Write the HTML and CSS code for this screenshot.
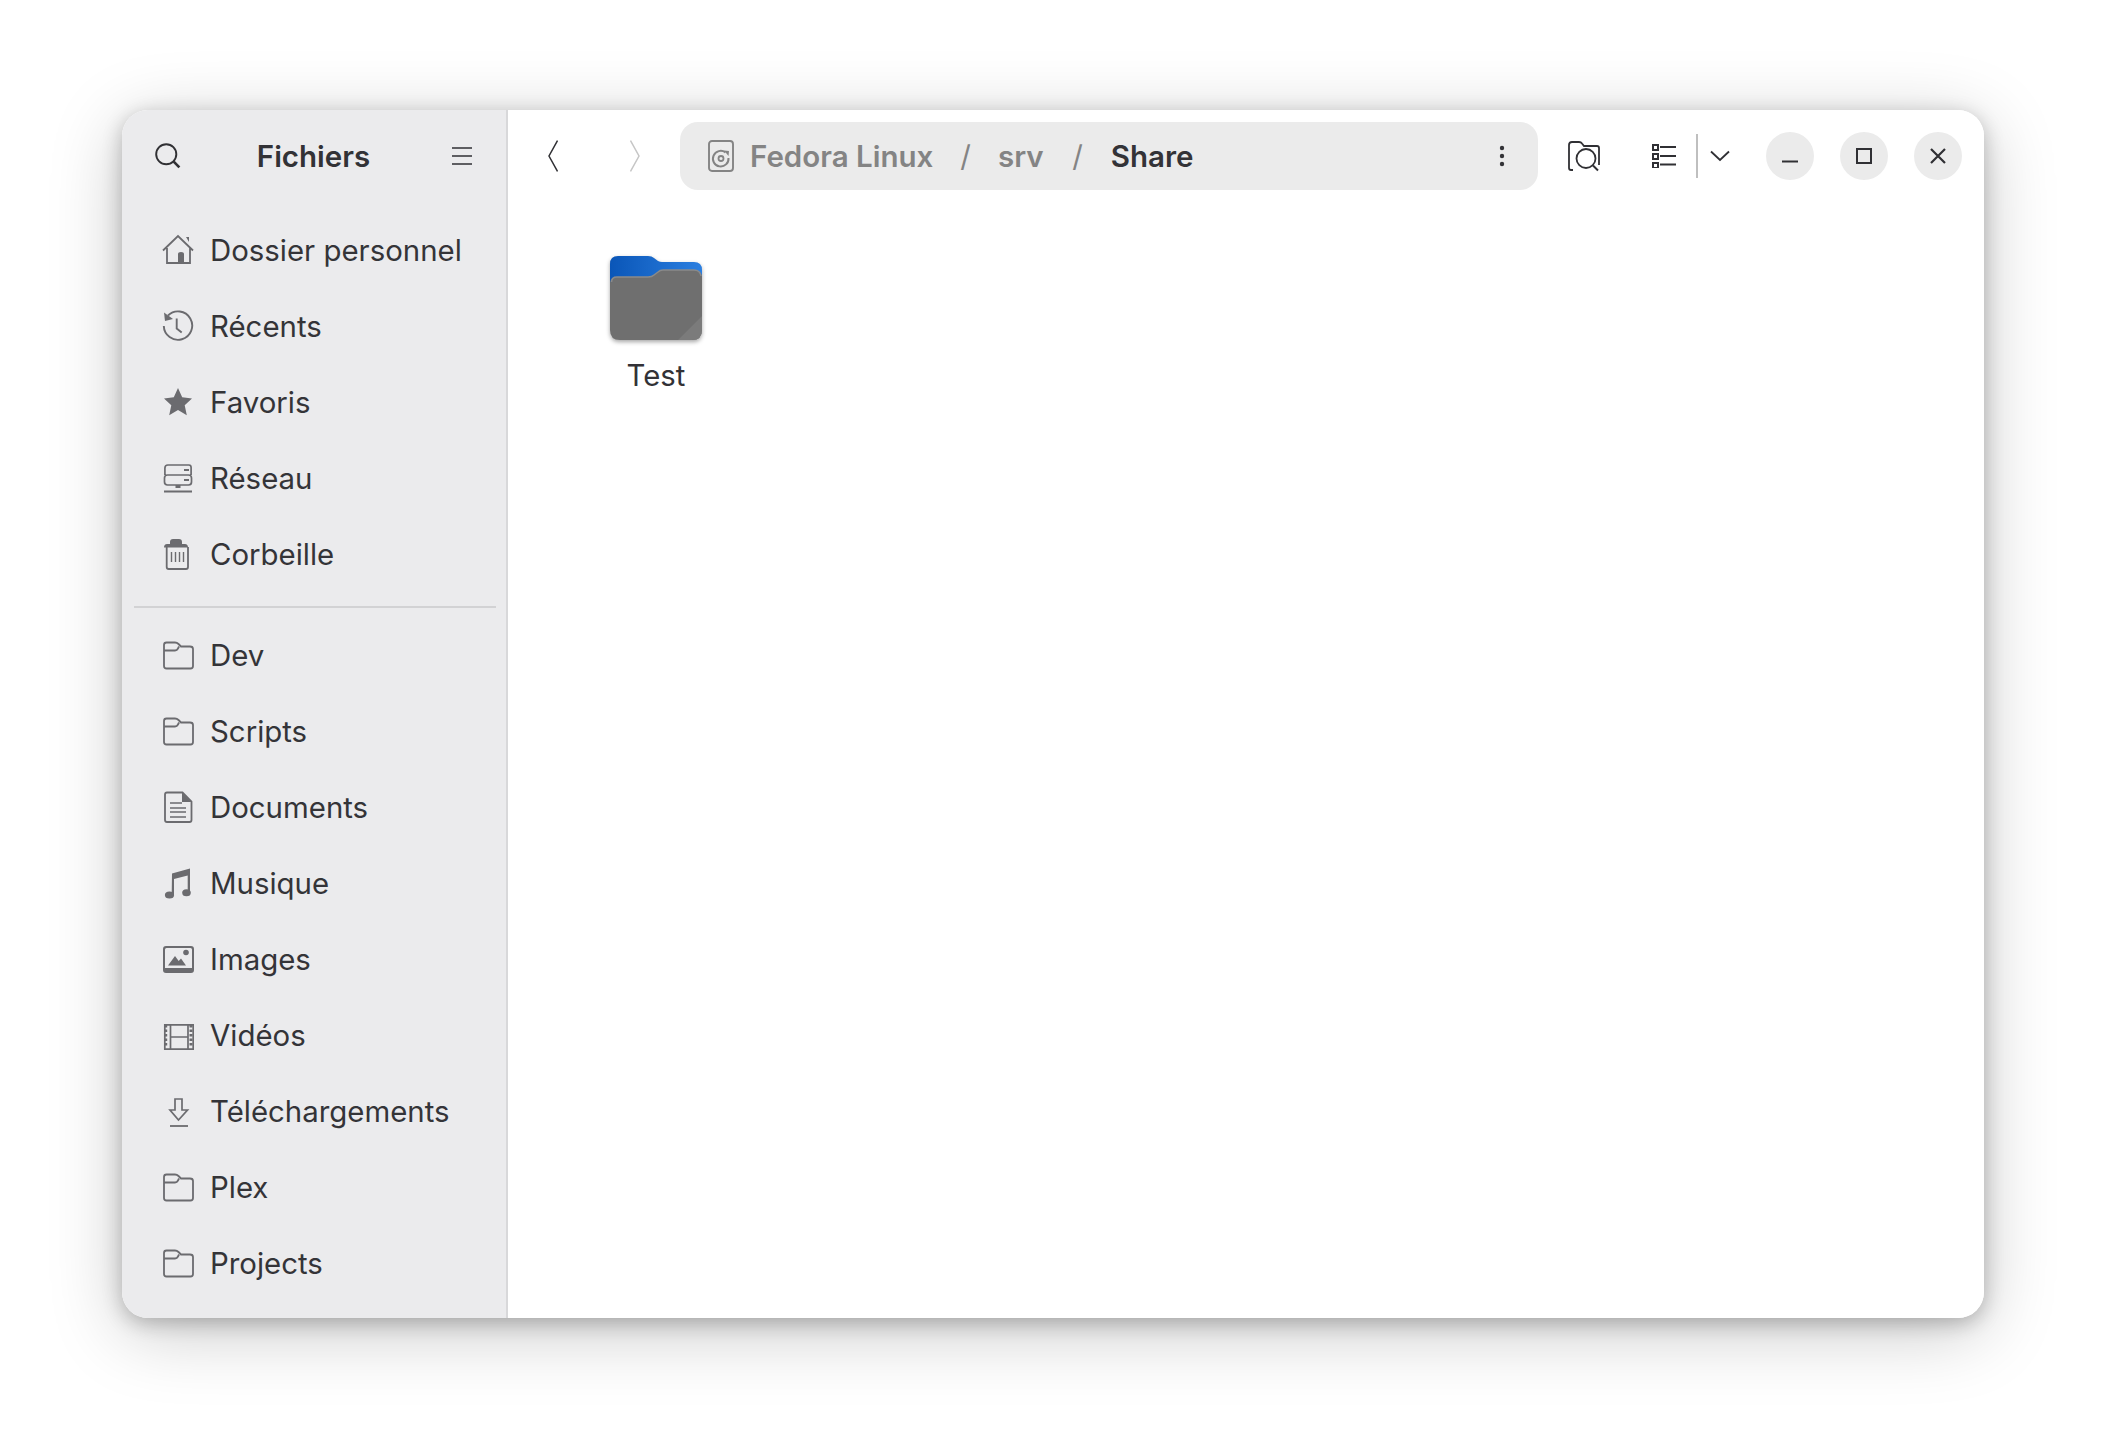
FILE: index.html
```html
<!DOCTYPE html>
<html lang="fr">
<head>
<meta charset="utf-8">
<title>Fichiers</title>
<link rel="stylesheet" href="styles.css">
</head>
<body>
<svg class="defs" width="0" height="0" aria-hidden="true">
  <symbol id="i-folder" viewBox="0 0 32 32"><path d="M2 27V6q0-2.500 2.500-2.500H13q2 0 3.500 1.500L19 7.500h9q3 0 3 2.500V27q0 2.500-2.500 2.500h-24Q2 29.500 2 27ZM2 11.500h11q2 0 3-2l1-2" fill="none" stroke="currentColor" stroke-width="1.800"/></symbol>
</svg>
<div class="window">
  <aside class="sidebar">
    <header class="side-head">
      <svg class="tool-icon search" viewBox="0 0 32 32"><circle cx="14" cy="14" r="11.500" fill="none" stroke="currentColor" stroke-width="2.200"/><path d="M22.500 22.500 29 29" stroke="currentColor" stroke-width="3"/></svg>
      <h1 class="title">Fichiers</h1>
      <svg class="tool-icon burger" viewBox="0 0 20 18"><path d="M0 1h20M0 9h20M0 17h20" stroke="currentColor" stroke-width="1.700"/></svg>
    </header>
    <nav class="places">
      <a class="row"><svg class="ico" viewBox="0 0 32 32"><path d="M1 16.500 16 2l15 14.500M5 14v15h23V14" fill="none" stroke="currentColor" stroke-width="1.800"/><path d="M16 29V20q0-2 3-2t3 2v9zM24 3h3v5z" fill="currentColor"/></svg><span>Dossier personnel</span></a>
      <a class="row"><svg class="ico" viewBox="0 0 32 32"><path d="M6 5.500A14.200 14.200 0 1 1 1.800 16" fill="none" stroke="currentColor" stroke-width="1.900"/><path d="M2 2.500 3 11l8-2z" fill="currentColor"/><path d="M14.700 8.500V18.500l5 4" fill="none" stroke="currentColor" stroke-width="1.900"/></svg><span>Récents</span></a>
      <a class="row"><svg class="ico" viewBox="0 0 32 32"><path d="M16 2l4.200 9.300 9.800 1.100-7.300 6.800 2.100 10L16 24.100 7.200 29.200l2.100-10L2 12.400l9.800-1.100z" fill="currentColor"/></svg><span>Favoris</span></a>
      <a class="row"><svg class="ico" viewBox="0 0 32 32"><path d="M2.900 13V6q0-3 3-3h21q2.200 0 2.200 2.500V13M5.500 13h21q3 0 3 3v4q0 3-3 3h-21q-3 0-3-3v-4q0-3 3-3Z" fill="none" stroke="currentColor" stroke-width="1.700"/><path d="M22 8h5M22 18h5M2 29.500h28" stroke="currentColor" stroke-width="1.800"/><path d="M13.500 23h5v3h-5z" fill="currentColor"/></svg><span>Réseau</span></a>
      <a class="row"><svg class="ico" viewBox="0 0 32 32"><path d="M2 9.500q0-3.500 3-3.500h3V4q0-3 3-3h6q3 0 3 3v2h3q3 0 3 3.500z" fill="currentColor"/><path d="M4.700 9v20q0 2 2 2H24q2 0 2-2V9" fill="none" stroke="currentColor" stroke-width="1.800"/><path d="M9.500 14v10M13.500 14v10M17.500 14v10M21.500 14v10" stroke="currentColor" stroke-width="1.400"/></svg><span>Corbeille</span></a>
    </nav>
    <hr class="divider">
    <nav class="places">
      <a class="row"><svg class="ico"><use href="#i-folder"/></svg><span>Dev</span></a>
      <a class="row"><svg class="ico"><use href="#i-folder"/></svg><span>Scripts</span></a>
      <a class="row"><svg class="ico" viewBox="0 0 32 32"><path d="M5 1.500h15.500l9 9V29q0 2-2 2H5q-2 0-2-2V3.500q0-2 2-2Z" fill="none" stroke="currentColor" stroke-width="1.800"/><path d="M20 1.500 29.500 11H20z" fill="currentColor"/><path d="M8 12h12M8 17h16M8 21h16M8 26h16" stroke="currentColor" stroke-width="1.500"/></svg><span>Documents</span></a>
      <a class="row"><svg class="ico" viewBox="0 0 32 32"><path d="M10 6.500 28 1.500V26h-2.300V8.500L12 12V28h-2.300z" fill="currentColor"/><ellipse cx="7.500" cy="28" rx="4.600" ry="3.500" fill="currentColor"/><ellipse cx="24.500" cy="25.800" rx="4.300" ry="3.500" fill="currentColor"/></svg><span>Musique</span></a>
      <a class="row"><svg class="ico" viewBox="0 0 32 32"><path d="M4 3h25q3 0 3 3v21q0 3-3 3H4q-3 0-3-3V6q0-3 3-3Zm.500 2Q3 5 3 6.500V25h27V6.500Q30 5 28.500 5Z" fill="currentColor" fill-rule="evenodd"/><path d="M6 22.500 13 13l3.700 5 2.300-2.500 5 7z" fill="currentColor"/><circle cx="24" cy="9.500" r="2.800" fill="currentColor"/></svg><span>Images</span></a>
      <a class="row"><svg class="ico" viewBox="0 0 32 32"><path d="M2.800 5.800h28.400v24.400H2.800z M8.500 6v24M26 6v24M8.500 18H26" fill="none" stroke="currentColor" stroke-width="1.700"/><path d="M3 6h2.200v2.500H3zm0 4.500h2.200V13H3zM3 15h2.200v2.500H3zm0 4.500h2.200V22H3zM3 24h2.200v2.500H3zM27.500 6h3v2.500h-3zm0 4.500h3V13h-3zm0 4.500h3v2.500h-3zm0 4.500h3V22h-3zm0 4.500h3v2.500h-3z" fill="currentColor"/></svg><span>Vidéos</span></a>
      <a class="row"><svg class="ico" viewBox="0 0 32 32"><path d="M13 4h7v11h5.500L16.500 25 8 15h5z" fill="none" stroke="currentColor" stroke-width="1.700"/><path d="M8 31h18" stroke="currentColor" stroke-width="1.800"/></svg><span>Téléchargements</span></a>
      <a class="row"><svg class="ico"><use href="#i-folder"/></svg><span>Plex</span></a>
      <a class="row"><svg class="ico"><use href="#i-folder"/></svg><span>Projects</span></a>
    </nav>
  </aside>
  <main class="main">
    <header class="toolbar">
      <svg class="nav back" viewBox="0 0 10 32"><path d="M9.500 0.500 1 16l8.500 15.500" fill="none" stroke="currentColor" stroke-width="1.500"/></svg>
      <svg class="nav fwd" viewBox="0 0 10 32"><path d="M0.500 0.500 9 16 0.500 31.500" fill="none" stroke="currentColor" stroke-width="1.500"/></svg>
      <div class="pathbar">
        <svg class="disk" viewBox="0 0 26 32"><rect x="1" y="1" width="24" height="30" rx="3" fill="none" stroke="currentColor" stroke-width="1.900"/><path d="M17.500 12.500A7.800 7.800 0 1 0 20.500 18" fill="none" stroke="currentColor" stroke-width="2"/><path d="M16 10.500l5 .5-.5 5z" fill="currentColor"/><circle cx="13" cy="18.500" r="2.500" fill="none" stroke="currentColor" stroke-width="1.800"/></svg>
        <span class="crumb">Fedora Linux</span>
        <span class="slash">/</span>
        <span class="crumb">srv</span>
        <span class="slash last">/</span>
        <span class="crumb current">Share</span>
        <svg class="dots" viewBox="0 0 6 22"><circle cx="3" cy="3" r="2.200"/><circle cx="3" cy="11" r="2.200"/><circle cx="3" cy="19" r="2.200"/></svg>
      </div>
      <svg class="find" viewBox="0 0 32 32"><path d="M5 30H3q-2 0-2-2V5q0-3 3-3h7q2 0 3 1.500L16 6h13q2 0 2 2v17" fill="none" stroke="currentColor" stroke-width="1.800"/><circle cx="18" cy="18.500" r="9.500" fill="none" stroke="currentColor" stroke-width="1.800"/><path d="M25 25.500l5 5" stroke="currentColor" stroke-width="2"/></svg>
      <svg class="list" viewBox="0 0 24 24"><path d="M1 1h5v5H1zM1 10h5v5H1zM1 19h5v5H1z" fill="none" stroke="currentColor" stroke-width="2"/><path d="M8 3h16M8 12h16M8 20.500h16" stroke="currentColor" stroke-width="2"/></svg>
      <i class="sep"></i>
      <svg class="chev" viewBox="0 0 20 12"><path d="M1 1.500 10 10l9-8.500" fill="none" stroke="currentColor" stroke-width="1.800"/></svg>
      <button class="wbtn min"><svg viewBox="0 0 16 16"><path d="M0 13.500h16" stroke="currentColor" stroke-width="2"/></svg></button>
      <button class="wbtn"><svg viewBox="0 0 16 16"><path d="M1 1h14v14H1z" fill="none" stroke="currentColor" stroke-width="2"/></svg></button>
      <button class="wbtn"><svg viewBox="0 0 16 16"><path d="M1 1l14 14M15 1 1 15" stroke="currentColor" stroke-width="2.200"/></svg></button>
    </header>
    <section class="files">
      <figure class="file">
        <svg class="bigfolder" viewBox="0 0 92 84">
          <defs>
            <linearGradient id="blue" x1="0" y1="0" x2="1" y2="0"><stop offset="0" stop-color="#0a56b8"/><stop offset="1" stop-color="#2b7fe0"/></linearGradient>
          </defs>
          <path d="M0 30V8q0-8 8-8h30q4 0 6 2l4 3q2 1 4 1h32q8 0 8 8v20z" fill="url(#blue)"/>
          <path d="M0 74V27q0-6 7-6h31q4 0 6-2l4-3q2-2 5-2h31q8 0 8 8v52q0 10-10 10H10Q0 84 0 74Z" fill="#6f6f6f"/>
          <path d="M1.500 26q0-5 5.500-5h31q4 0 6-2l4-3q2-2 5-2h31q6 0 7 6" fill="none" stroke="#8a8a8a" stroke-width="1.500"/>
          <path d="M68 84 92 60v14q0 10-10 10z" fill="#7b7b7b"/>
        </svg>
        <figcaption class="name">Test</figcaption>
      </figure>
    </section>
  </main>
</div>
</body>
</html>
```
FILE: styles.css
```css
* { box-sizing: border-box; }
html, body { margin: 0; height: 100%; background: #fff; }
body {
  padding: 110px 122px 134px;
  font-family: Inter, "Noto Sans", sans-serif;
  color: #323236;
  overflow: hidden;
}
.defs { position: absolute; }
.window {
  display: flex;
  width: 1862px;
  height: 1208px;
  border-radius: 26px;
  background: #fff;
  box-shadow: 0 14px 72px rgba(0,0,0,.22), 0 5px 20px rgba(0,0,0,.24);
}
.sidebar {
  flex: 0 0 386px;
  background: #ebebed;
  border-right: 2px solid #d8d8da;
  border-radius: 26px 0 0 26px;
}
.side-head {
  display: flex;
  align-items: center;
  height: 92px;
  margin-bottom: 10px;
  padding: 0 34px 0 32px;
}
.tool-icon { display: block; color: #303034; }
.search { width: 28px; height: 28px; }
.burger { width: 20px; height: 18px; }
.title {
  flex: 1;
  margin: 0;
  font-size: 29.500px;
  font-weight: 600;
  text-align: center;
  padding-right: 7px;
}
.places { display: flex; flex-direction: column; }
.row {
  display: flex;
  align-items: center;
  gap: 16px;
  height: 76px;
  padding-left: 40px;
  font-size: 29.400px;
  color: #343438;
}
.ico { flex: none; width: 32px; height: 32px; color: #6b6b6f; }
.divider {
  height: 2px;
  margin: 14px 10px 9px 12px;
  border: 0;
  background: #d2d2d4;
}
.main { flex: 1; display: flex; flex-direction: column; min-width: 0; border-radius: 0 26px 26px 0; background: #fff; }
.toolbar {
  display: flex;
  align-items: center;
  height: 92px;
  flex: none;
  color: #303034;
}
.nav { flex: none; width: 10px; height: 32px; }
.back { margin-left: 40px; }
.fwd { margin-left: 72px; color: #c6c6c6; }
.pathbar {
  display: flex;
  align-items: center;
  width: 858px;
  height: 68px;
  margin-left: 40px;
  padding: 0 33px 0 28px;
  border-radius: 18px;
  background: #ebebeb;
  font-size: 29.500px;
  font-weight: 600;
  color: #848484;
}
.disk { width: 26px; height: 32px; flex: none; margin-right: 16px; }
.slash { margin: 0 27px; font-weight: 400; }
.slash.last { margin: 0 28px 0 28.500px; }
.current { color: #333337; }
.dots { width: 6px; height: 22px; margin-left: auto; fill: #333337; }
.find { width: 32px; height: 32px; margin-left: 30px; flex: none; }
.list { width: 24px; height: 24px; margin-left: 52px; flex: none; }
.sep { width: 2px; height: 44px; margin-left: 20px; background: #bfbfbf; flex: none; }
.chev { width: 20px; height: 12px; margin-left: 12px; flex: none; }
.wbtn {
  display: flex;
  align-items: center;
  justify-content: center;
  flex: none;
  width: 48px;
  height: 48px;
  margin: 0 0 0 26px;
  padding: 0;
  border: 0;
  border-radius: 50%;
  background: #ebebeb;
  color: #303034;
}
.wbtn svg { width: 16px; height: 16px; display: block; }
.wbtn.min { margin-left: 36px; }
.files { flex: 1; padding: 54px 0 0 61px; }
.file { display: flex; flex-direction: column; align-items: center; width: 174px; margin: 0; }
.bigfolder { width: 92px; height: 84px; display: block; filter: drop-shadow(0 2px 2px rgba(0,0,0,.35)); }
.name { margin-top: 18px; font-size: 29.300px; line-height: 36px; color: #323236; }
```
